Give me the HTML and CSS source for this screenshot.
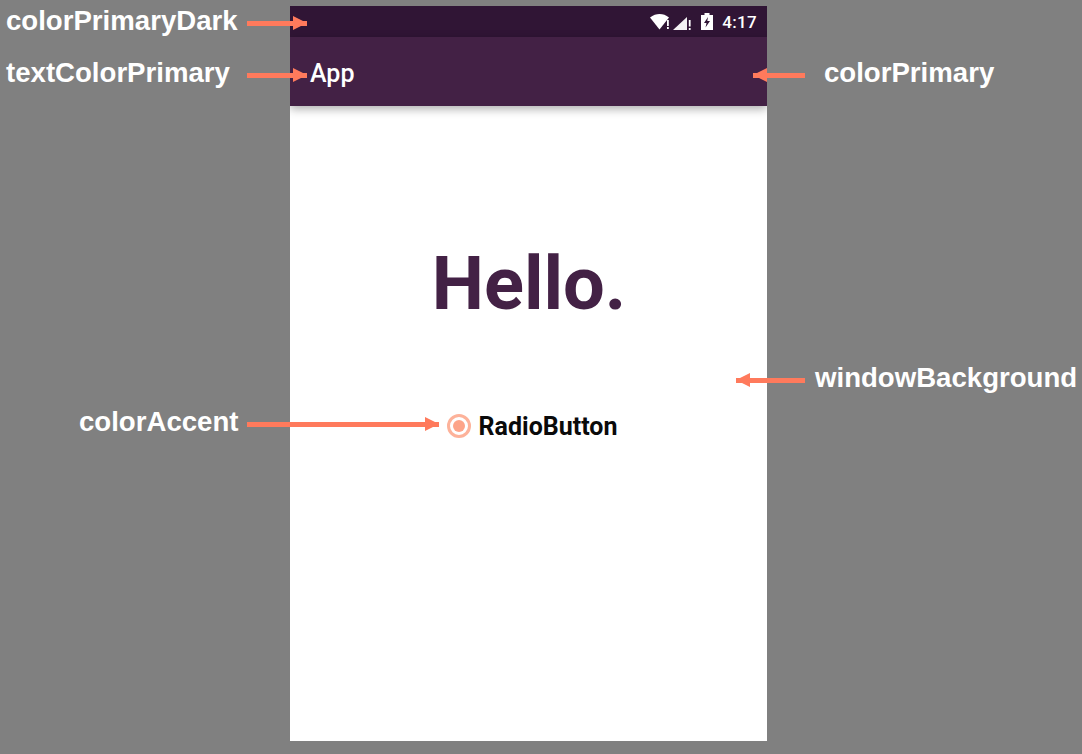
FILE: index.html
```html
<!DOCTYPE html>
<html lang="en">
<head>
<meta charset="utf-8">
<title>Theme colours</title>
<link rel="stylesheet" href="styles.css">
</head>
<body>
<main class="canvas">
  <section class="phone">
    <div class="status-bar">
      <svg class="ic-wifi" width="22" height="16" viewBox="0 0 22 16"><path d="M0 3.500C3 1 6.500 0 9.500 0c3.500 0 6.500 1 9.500 3.500L9.500 15.500z" fill="#fff"/><rect x="17" y="6" width="1.800" height="6" fill="#fff"/><rect x="17" y="13" width="1.800" height="2" fill="#fff"/></svg>
      <svg class="ic-signal" width="19" height="14" viewBox="0 0 19 14"><path d="M0 14L14 1v13z" fill="#fff" opacity=".95"/><rect x="15.800" y="4" width="1.800" height="6.500" fill="#fff"/><rect x="15.800" y="12" width="1.800" height="2" fill="#fff"/></svg>
      <svg class="ic-battery" width="12" height="17" viewBox="0 0 12 17"><path d="M3.500 0h5v2H12v15H0V2h3.500z" fill="#fff"/><path d="M7 4L3 10h2.500L4.500 14.500 9 8H6.300z" fill="#301535"/></svg>
      <span class="clock">4:17</span>
    </div>
    <header class="app-bar"><span class="app-title">App</span></header>
    <div class="content">
      <h1 class="hello">Hello.</h1>
      <div class="radio">
        <span class="radio-ring"><span class="radio-dot"></span></span>
        <span class="radio-label">RadioButton</span>
      </div>
    </div>
  </section>

  <span class="label label-dark">colorPrimaryDark</span>
  <span class="label label-text">textColorPrimary</span>
  <span class="label label-primary">colorPrimary</span>
  <span class="label label-window">windowBackground</span>
  <span class="label label-accent">colorAccent</span>

  <span class="arrow arrow-right arrow-dark"></span>
  <span class="arrow arrow-right arrow-text"></span>
  <span class="arrow arrow-left arrow-primary"></span>
  <span class="arrow arrow-left arrow-window"></span>
  <span class="arrow arrow-right arrow-accent"></span>
</main>
</body>
</html>
```
FILE: styles.css
```css
html, body { margin: 0; padding: 0; }
body { background: #808080; overflow: hidden; }
.canvas { position: relative; width: 1082px; height: 754px; padding-top: 6px; box-sizing: border-box; }
.phone { width: 477px; height: 735px; margin-left: 290px; background: #fff; display: flex; flex-direction: column; font-family: Roboto, sans-serif; overflow: hidden; }
.status-bar { height: 31px; background: #301535; display: flex; align-items: center; justify-content: flex-end; padding-right: 10px; color: #fff; }
.ic-wifi { margin-right: 1px; }
.ic-signal { margin-right: 9px; margin-top: 2px; }
.ic-battery { margin-right: 9px; }
.clock { font-size: 17px; font-weight: 500; line-height: 20px; letter-spacing: .3px; }
.app-bar { height: 69px; background: #432145; box-shadow: 0 3px 9px rgba(0,0,0,.32); display: flex; align-items: center; padding: 5px 0 0 20px; box-sizing: border-box; position: relative; }
.app-title { color: #fff; font-size: 25px; font-weight: 500; line-height: 30px; }
.content { flex: 1; display: flex; flex-direction: column; align-items: center; }
.hello { margin: 128px 0 0 1px; color: #432145; font-size: 74px; font-weight: 700; line-height: 100px; }
.radio { margin-top: 76px; display: flex; align-items: center; gap: 8px; margin-left: 7px; }
.radio-ring { width: 24px; height: 24px; box-sizing: border-box; border: 3px solid #fdb29a; border-radius: 50%; display: flex; align-items: center; justify-content: center; }
.radio-dot { width: 12px; height: 12px; border-radius: 50%; background: #fda489; }
.radio-label { font-size: 25px; font-weight: 700; color: #0a0a0a; line-height: 30px; margin-top: 2px; }
.label { position: absolute; font-family: "Liberation Sans", Arial, sans-serif; font-weight: 700; font-size: 27.6px; line-height: 32px; color: #fff; white-space: nowrap; }
.label-dark { left: 6px; top: 5px; }
.label-text { left: 6px; top: 57px; }
.label-primary { left: 824px; top: 57px; }
.label-window { left: 815px; top: 362px; }
.label-accent { left: 79px; top: 406px; }
.arrow { position: absolute; height: 5px; background: #ff7a5c; }
.arrow::after { content: ""; position: absolute; top: -5px; border-top: 7.500px solid transparent; border-bottom: 7.500px solid transparent; }
.arrow-right::after { right: 0; border-left: 14px solid #ff7a5c; }
.arrow-left::after { left: 0; border-right: 14px solid #ff7a5c; }
.arrow-dark { left: 247px; top: 21px; width: 60px; }
.arrow-text { left: 247px; top: 73px; width: 60px; }
.arrow-primary { left: 753px; top: 73px; width: 52px; }
.arrow-window { left: 736px; top: 378px; width: 69px; }
.arrow-accent { left: 247px; top: 422px; width: 192px; }
```
